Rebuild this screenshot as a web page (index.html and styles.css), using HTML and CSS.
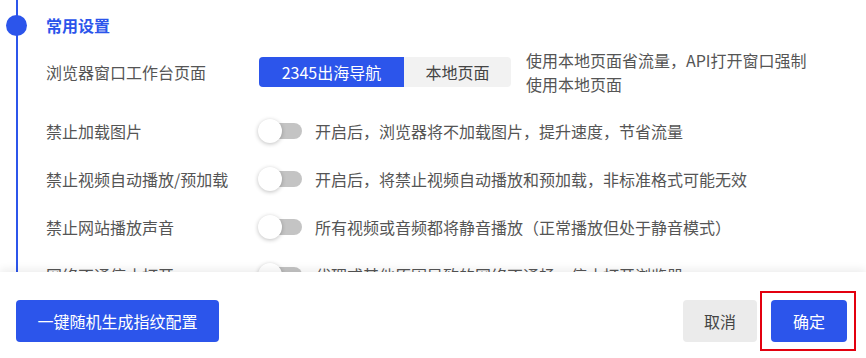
FILE: index.html
```html
<!DOCTYPE html>
<html lang="zh-CN">
<head>
    <meta charset="UTF-8">
    <meta name="viewport" content="width=device-width, initial-scale=1.0">
    <title>常用设置</title>
    <link rel="stylesheet" href="styles.css">
</head>
<body>
    <div class="scroll">
        <div class="section">
            <div class="section-title">常用设置</div>

            <div class="row row-first">
                <div class="label">浏览器窗口工作台页面</div>
                <div class="segment">
                    <span class="seg-item active">2345出海导航</span>
                    <span class="seg-item">本地页面</span>
                </div>
                <div class="desc desc-wide">使用本地页面省流量，API打开窗口强制<br>使用本地页面</div>
            </div>

            <div class="row">
                <div class="label">禁止加载图片</div>
                <span class="switch"></span>
                <div class="desc">开启后，浏览器将不加载图片，提升速度，节省流量</div>
            </div>

            <div class="row">
                <div class="label">禁止视频自动播放/预加载</div>
                <span class="switch"></span>
                <div class="desc">开启后，将禁止视频自动播放和预加载，非标准格式可能无效</div>
            </div>

            <div class="row">
                <div class="label">禁止网站播放声音</div>
                <span class="switch"></span>
                <div class="desc">所有视频或音频都将静音播放（正常播放但处于静音模式）</div>
            </div>

            <div class="row">
                <div class="label">网络不通停止打开</div>
                <span class="switch"></span>
                <div class="desc">代理或其他原因导致的网络不通畅，停止打开浏览器</div>
            </div>
        </div>
    </div>

    <div class="footer">
        <button class="btn btn-primary btn-wide">一键随机生成指纹配置</button>
        <div class="actions">
            <button class="btn btn-gray">取消</button>
            <button class="btn btn-primary btn-ok">确定</button>
        </div>
    </div>
</body>
</html>
```

FILE: styles.css
```css
body {
    margin: 0;
    width: 866px;
    height: 358px;
    overflow: hidden;
    background: #fff;
    font-family: "Noto Sans CJK SC", "Noto Sans", sans-serif;
    font-size: 16px;
    color: #555;
}
.scroll {
    height: 272px;
    overflow: hidden;
}
.section {
    position: relative;
    margin-left: 16px;
    border-left: 2px solid #2c55eb;
    padding: 13px 0 0 28px;
    min-height: 320px;
}
.section::before {
    content: "";
    position: absolute;
    left: -12px;
    top: 15px;
    width: 21px;
    height: 21px;
    border-radius: 50%;
    background: #2c55eb;
}
.section-title {
    color: #2c55eb;
    font-weight: bold;
    line-height: 24px;
    margin-bottom: 11px;
}
.row {
    display: flex;
    align-items: center;
    min-height: 48px;
    line-height: 24px;
}
.row-first {
    padding-bottom: 11px;
}
.label {
    width: 213px;
    flex-shrink: 0;
}
.segment {
    display: flex;
    height: 30px;
    background: #f2f2f2;
    border-radius: 4px;
    overflow: hidden;
}
.seg-item {
    display: flex;
    align-items: center;
    justify-content: center;
    width: 107px;
    color: #444;
}
.seg-item.active {
    width: 145px;
    background: #2c55eb;
    color: #fff;
}
.desc {
    margin-left: 13px;
    white-space: nowrap;
}
.desc-wide {
    margin-left: 15px;
}
.switch {
    position: relative;
    display: inline-block;
    width: 43px;
    height: 16px;
    border-radius: 8px;
    background: #c4c4c4;
    flex-shrink: 0;
}
.switch::after {
    content: "";
    position: absolute;
    left: -1px;
    top: -4px;
    width: 24px;
    height: 24px;
    border-radius: 50%;
    background: #fff;
    box-shadow: 0 1px 4px rgba(0, 0, 0, 0.25);
}
.footer {
    position: relative;
    height: 86px;
    box-sizing: border-box;
    padding: 28px 19px 0 16px;
    display: flex;
    justify-content: space-between;
    align-items: flex-start;
    background: #fff;
    box-shadow: 0 -3px 8px rgba(0, 0, 0, 0.07);
}
.actions {
    display: flex;
    gap: 14px;
}
.btn {
    height: 42px;
    border: none;
    border-radius: 4px;
    font-family: inherit;
    font-size: 16px;
    padding: 0 20px;
    cursor: pointer;
}
.btn-primary {
    background: #2c55eb;
    color: #fff;
}
.btn-wide {
    width: 203px;
}
.btn-gray {
    width: 74px;
    background: #ebebeb;
    color: #444;
}
.btn-ok {
    position: relative;
    width: 76px;
}
.btn-ok::after {
    content: "";
    position: absolute;
    left: -11px;
    top: -9px;
    right: -9px;
    bottom: -9px;
    border: 2px solid #e3000f;
}
```
